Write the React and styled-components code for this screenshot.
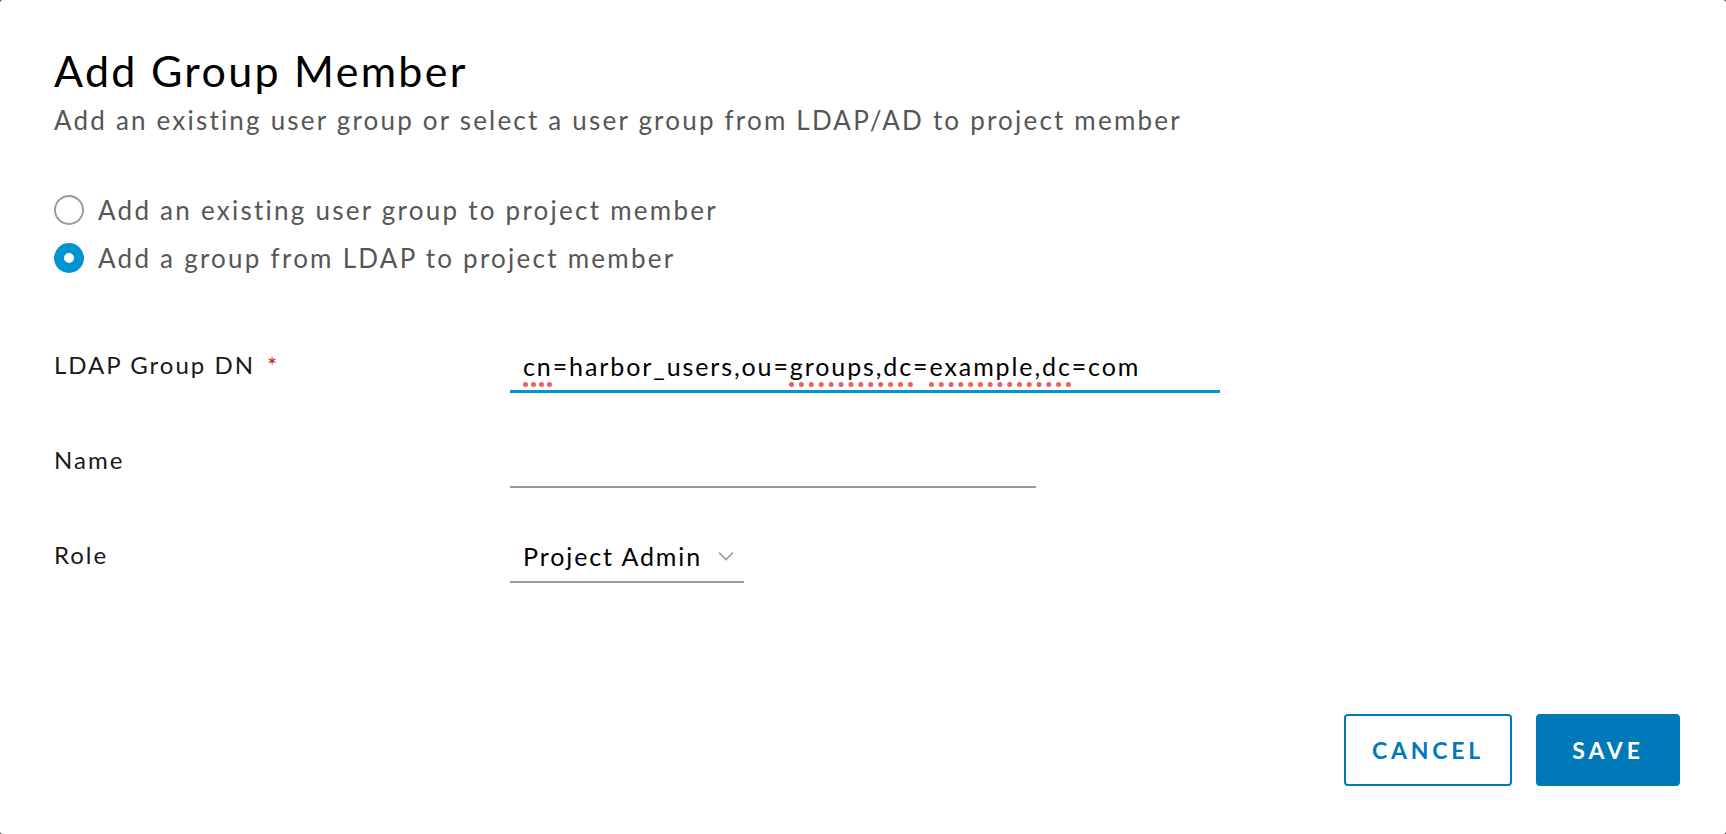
import styled, { createGlobalStyle } from "styled-components";

const GlobalStyle = createGlobalStyle`
  html, body {
    margin: 0;
    padding: 0;
    background: #4a4a4a;
  }
  #root {
    width: 1726px;
    height: 834px;
  }
`;

const FONT = `Lato, "Open Sans", "Liberation Sans", sans-serif`;
const BLUE = "#0094d2";
const ACTION = "#0079b8";

const Modal = styled.div`
  box-sizing: border-box;
  width: 1726px;
  height: 834px;
  background: #fff;
  border-radius: 3px;
  padding: 46px 46px 48px 54px;
  display: flex;
  flex-direction: column;
  font-family: ${FONT};
`;

const Title = styled.h1`
  margin: 0;
  font-size: 43px;
  line-height: 50px;
  font-weight: 400;
  letter-spacing: 2.3px;
  color: #000;
`;

const Subtitle = styled.p`
  margin: 8px 0 0;
  font-size: 26px;
  line-height: 32px;
  letter-spacing: 2.2px;
  color: #565656;
`;

const RadioGroup = styled.div`
  margin-top: 58px;
  display: flex;
  flex-direction: column;
  gap: 16px;
`;

const RadioRow = styled.label`
  display: flex;
  align-items: center;
  gap: 14px;
  font-size: 26px;
  line-height: 32px;
  letter-spacing: 2.25px;
  color: #565656;
`;

const RadioDot = styled.span`
  box-sizing: border-box;
  width: 30px;
  height: 30px;
  border-radius: 50%;
  flex-shrink: 0;
  border: ${(p) => (p.$checked ? `10px solid ${BLUE}` : "2px solid #9a9a9a")};
  background: #fff;
`;

const Form = styled.div`
  margin-top: 64px;
  display: grid;
  grid-template-columns: 456px auto;
  grid-auto-rows: 55px;
  row-gap: 40px;
  align-items: end;
`;

const Label = styled.div`
  font-size: 24px;
  line-height: 32px;
  letter-spacing: 2px;
  color: #1a1a1a;
  padding-bottom: 12px;
`;

const Required = styled.span`
  color: #c92100;
  margin-left: 12px;
`;

const Field = styled.div`
  box-sizing: border-box;
  width: ${(p) => p.$width}px;
  height: 55px;
  padding: 0 13px ${(p) => (p.$focused ? 8 : 9)}px;
  display: flex;
  align-items: flex-end;
  gap: 16px;
  border-bottom: ${(p) => (p.$focused ? `3px solid ${BLUE}` : "2px solid #9a9a9a")};
  font-size: 25px;
  line-height: 32px;
  letter-spacing: 1.9px;
  color: #000;
  white-space: nowrap;
`;

const Misspelled = styled.span`
  text-decoration: underline dotted #f25c5c;
  text-decoration-thickness: 5px;
  text-underline-offset: 6px;
`;

const Chevron = styled.svg`
  flex-shrink: 0;
  width: 16px;
  height: 10px;
  margin-bottom: 11px;
`;

const Footer = styled.div`
  margin-top: auto;
  display: flex;
  justify-content: flex-end;
  gap: 24px;
`;

const Button = styled.button`
  box-sizing: border-box;
  height: 72px;
  min-width: ${(p) => (p.$primary ? 144 : 168)}px;
  padding: 0 24px;
  border-radius: 4px;
  border: 2px solid ${ACTION};
  background: ${(p) => (p.$primary ? ACTION : "#fff")};
  color: ${(p) => (p.$primary ? "#fff" : ACTION)};
  font-family: ${FONT};
  font-size: 23px;
  font-weight: 700;
  letter-spacing: 3.8px;
  text-transform: uppercase;
  cursor: pointer;
`;

const App = () => {
  return (
    <>
      <GlobalStyle />
      <Modal>
        <Title>Add Group Member</Title>
        <Subtitle>
          Add an existing user group or select a user group from LDAP/AD to project member
        </Subtitle>

        <RadioGroup>
          <RadioRow>
            <RadioDot />
            Add an existing user group to project member
          </RadioRow>
          <RadioRow>
            <RadioDot $checked />
            Add a group from LDAP to project member
          </RadioRow>
        </RadioGroup>

        <Form>
          <Label>
            LDAP Group DN<Required>*</Required>
          </Label>
          <Field $width={710} $focused>
            <span>
              <Misspelled>cn</Misspelled>=harbor_users,ou=<Misspelled>groups,dc</Misspelled>=
              <Misspelled>example,dc</Misspelled>=com
            </span>
          </Field>

          <Label>Name</Label>
          <Field $width={526} />

          <Label>Role</Label>
          <Field $width={234}>
            <span>Project Admin</span>
            <Chevron viewBox="0 0 16 10">
              <polyline points="1,1.5 8,8.5 15,1.5" fill="none" stroke="#9a9a9a" strokeWidth="1.6" />
            </Chevron>
          </Field>
        </Form>

        <Footer>
          <Button>Cancel</Button>
          <Button $primary>Save</Button>
        </Footer>
      </Modal>
    </>
  );
};

export default App;
